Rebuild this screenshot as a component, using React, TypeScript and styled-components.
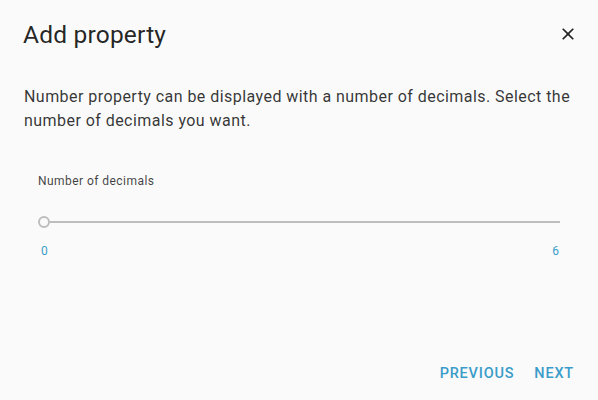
import { FC } from 'react'
import styled, { createGlobalStyle } from 'styled-components'

const GlobalStyle = createGlobalStyle`
  html, body {
    margin: 0;
    padding: 0;
    background: #fafafa;
  }
  body {
    font-family: Roboto, "Noto Sans", sans-serif;
  }
`

const Dialog = styled.div`
  width: 598px;
  height: 400px;
  box-sizing: border-box;
  background: #fafafa;
  display: flex;
  flex-direction: column;
`

const Header = styled.header`
  display: flex;
  align-items: center;
  justify-content: space-between;
  padding: 19px 20px 0 23px;
  height: 30px;
`

const Title = styled.h2`
  margin: 0;
  font-size: 24.5px;
  font-weight: 400;
  color: rgba(0, 0, 0, 0.87);
  letter-spacing: 0.2px;
`

const CloseButton = styled.button`
  border: none;
  background: transparent;
  padding: 0;
  width: 20px;
  height: 20px;
  display: flex;
  align-items: center;
  justify-content: center;
  cursor: pointer;
  color: rgba(0, 0, 0, 0.87);
`

const Body = styled.div`
  flex: 1;
  padding: 36px 24px 0 24px;
`

const Text = styled.p`
  margin: 0 -12px 0 0;
  font-size: 16px;
  line-height: 24px;
  color: rgba(0, 0, 0, 0.8);
  letter-spacing: 0.45px;
`

const Field = styled.div`
  padding: 41px 14px 0 14px;
`

const Label = styled.div`
  font-size: 12px;
  color: rgba(0, 0, 0, 0.75);
  letter-spacing: 0.45px;
`

const SliderRow = styled.div`
  margin-top: 28px;
  height: 12px;
  display: flex;
  align-items: center;
`

const Thumb = styled.span`
  width: 8px;
  height: 8px;
  border: 2px solid #bdbdbd;
  border-radius: 50%;
  background: #fafafa;
  flex-shrink: 0;
`

const Track = styled.span`
  flex: 1;
  height: 2px;
  background: #bdbdbd;
`

const Marks = styled.div`
  display: flex;
  justify-content: space-between;
  margin-top: 16px;
  padding: 0 1px 0 3px;
  font-size: 12px;
  color: #3a9cc9;
`

const Actions = styled.footer`
  display: flex;
  justify-content: flex-end;
  gap: 20px;
  padding: 0 24px 16px 0;
`

const ActionButton = styled.button`
  border: none;
  background: transparent;
  padding: 0;
  font-family: Roboto, "Noto Sans", sans-serif;
  font-size: 14.5px;
  font-weight: 500;
  letter-spacing: 0.8px;
  color: #3a9cc9;
  line-height: 20px;
  cursor: pointer;
`

const App: FC = () => (
  <>
    <GlobalStyle />
    <Dialog>
      <Header>
        <Title>Add property</Title>
        <CloseButton aria-label="close">
          <svg width="20" height="20" viewBox="0 0 24 24">
            <path
              d="M19 6.41 17.59 5 12 10.59 6.41 5 5 6.41 10.59 12 5 17.59 6.41 19 12 13.41 17.59 19 19 17.59 13.41 12z"
              fill="currentColor"
            />
          </svg>
        </CloseButton>
      </Header>
      <Body>
        <Text>
          Number property can be displayed with a number of decimals. Select the number of decimals
          you want.
        </Text>
        <Field>
          <Label>Number of decimals</Label>
          <SliderRow>
            <Thumb />
            <Track />
          </SliderRow>
          <Marks>
            <span>0</span>
            <span>6</span>
          </Marks>
        </Field>
      </Body>
      <Actions>
        <ActionButton>PREVIOUS</ActionButton>
        <ActionButton>NEXT</ActionButton>
      </Actions>
    </Dialog>
  </>
)

export default App
